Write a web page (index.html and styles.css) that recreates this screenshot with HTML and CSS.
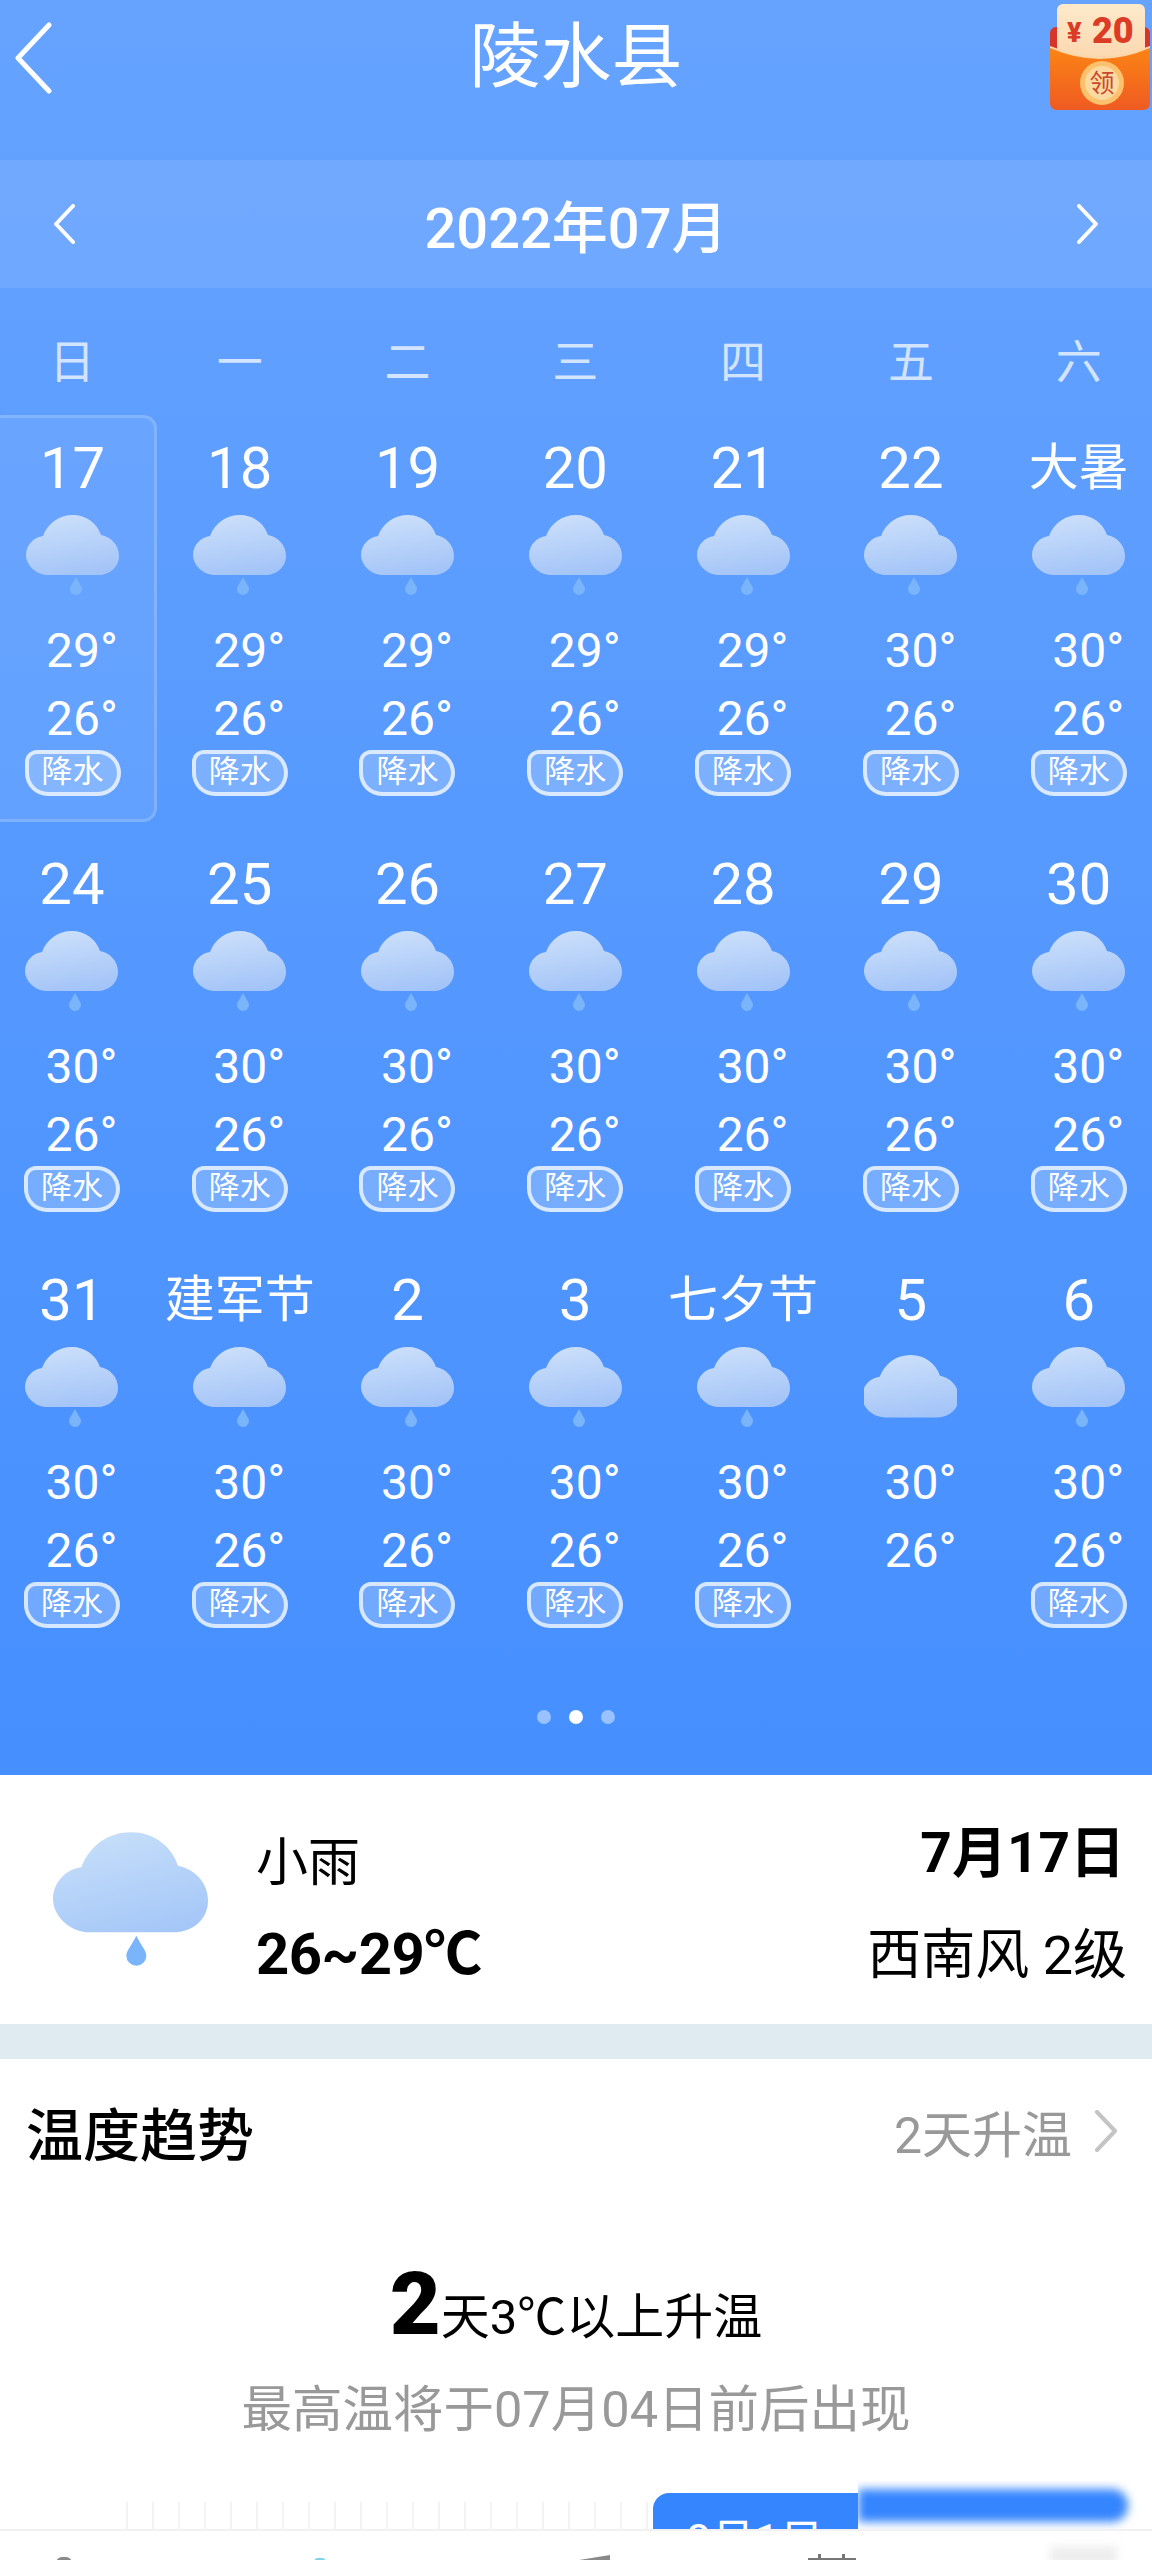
FILE: index.html
```html
<!DOCTYPE html>
<html lang="zh-CN">
<head>
  <meta charset="UTF-8">
  <meta name="viewport" content="width=device-width, initial-scale=1.0">
  <title>陵水县 - 日历</title>
  <link rel="stylesheet" href="styles.css">
</head>
<body>
  <svg class="defs" width="0" height="0">
    <defs>
      <linearGradient id="cloudFill" x1="0.35" y1="0" x2="0.6" y2="1">
        <stop offset="0" stop-color="#cbdffa"/>
        <stop offset="1" stop-color="#a3c4f8"/>
      </linearGradient>
      <linearGradient id="cloudBig" x1="0.3" y1="0" x2="0.7" y2="1">
        <stop offset="0" stop-color="#c6def9"/>
        <stop offset="1" stop-color="#a5c7f8"/>
      </linearGradient>
      <linearGradient id="packBody" x1="0" y1="0" x2="0" y2="1">
        <stop offset="0" stop-color="#fb8514"/>
        <stop offset="1" stop-color="#ef5a22"/>
      </linearGradient>
      <linearGradient id="packCard" x1="0" y1="0" x2="0" y2="1">
        <stop offset="0" stop-color="#fdeacb"/>
        <stop offset="1" stop-color="#fcd6ac"/>
      </linearGradient>
      <path id="cloudShape" d="M22 60C10 60 0 50 0 40C0 30 8 22 17 21C22 8 33 0 47 0C60 0 71 8 75 20C85 22 93 30 93 41C93 52 84 60 72 60Z"/>
      <symbol id="rain" viewBox="0 0 93 80">
        <use href="#cloudShape" fill="url(#cloudFill)"/>
        <path d="M50 62C53 68 56 71 56 74A6 6 0 0 1 44 74C44 71 47 68 50 62Z" fill="#7ab5fb"/>
      </symbol>
      <symbol id="cloudy" viewBox="0 0 93 80" overflow="visible">
        <g transform="translate(-2 8) scale(1.04)"><use href="#cloudShape" fill="url(#cloudFill)"/></g>
      </symbol>
    </defs>
  </svg>

  <div class="page">
    <section class="weather">
      <header class="topbar">
        <svg class="back" width="40" height="72" viewBox="0 0 40 72"><path d="M36 3L5 36L36 69" fill="none" stroke="#fff" stroke-width="5" stroke-linecap="round" stroke-linejoin="round"/></svg>
        <h1>陵水县</h1>
        <svg class="redpack" width="100" height="108" viewBox="0 0 100 108">
          <rect x="0" y="24" width="100" height="60" rx="6" fill="#d8352a"/>
          <rect x="7" y="1" width="88" height="60" rx="6" fill="url(#packCard)"/>
          <text x="17" y="39" class="pack-yen">¥</text>
          <text x="42" y="40" class="pack-amount">20</text>
          <path d="M0 44Q50 66 100 44V100Q100 107 93 107H7Q0 107 0 100Z" fill="url(#packBody)"/>
          <path d="M0 44Q50 66 100 44" fill="none" stroke="#fcd6a6" stroke-width="2"/>
          <circle cx="52" cy="80" r="22" fill="#fcc16c"/>
          <circle cx="52" cy="80" r="17" fill="#fbd9a0"/>
          <text x="52" y="89" text-anchor="middle" class="pack-label">领</text>
        </svg>
      </header>

      <div class="month-nav">
        <svg width="24" height="40" viewBox="0 0 24 40"><path d="M21 2L4 20L21 38" fill="none" stroke="#fff" stroke-width="4" stroke-linecap="round" stroke-linejoin="round"/></svg>
        <div class="month">2022年07月</div>
        <svg width="24" height="40" viewBox="0 0 24 40"><path d="M3 2L20 20L3 38" fill="none" stroke="#fff" stroke-width="4" stroke-linecap="round" stroke-linejoin="round"/></svg>
      </div>

      <div class="weekdays">
        <span>日</span><span>一</span><span>二</span><span>三</span><span>四</span><span>五</span><span>六</span>
      </div>

      <div class="calendar">
        <div class="day selected"><div class="date">17</div><svg class="icon"><use href="#rain"/></svg><div class="temp">29°</div><div class="temp">26°</div><div class="tag">降水</div></div>
        <div class="day"><div class="date">18</div><svg class="icon"><use href="#rain"/></svg><div class="temp">29°</div><div class="temp">26°</div><div class="tag">降水</div></div>
        <div class="day"><div class="date">19</div><svg class="icon"><use href="#rain"/></svg><div class="temp">29°</div><div class="temp">26°</div><div class="tag">降水</div></div>
        <div class="day"><div class="date">20</div><svg class="icon"><use href="#rain"/></svg><div class="temp">29°</div><div class="temp">26°</div><div class="tag">降水</div></div>
        <div class="day"><div class="date">21</div><svg class="icon"><use href="#rain"/></svg><div class="temp">29°</div><div class="temp">26°</div><div class="tag">降水</div></div>
        <div class="day"><div class="date">22</div><svg class="icon"><use href="#rain"/></svg><div class="temp">30°</div><div class="temp">26°</div><div class="tag">降水</div></div>
        <div class="day"><div class="date festival">大暑</div><svg class="icon"><use href="#rain"/></svg><div class="temp">30°</div><div class="temp">26°</div><div class="tag">降水</div></div>

        <div class="day"><div class="date">24</div><svg class="icon"><use href="#rain"/></svg><div class="temp">30°</div><div class="temp">26°</div><div class="tag">降水</div></div>
        <div class="day"><div class="date">25</div><svg class="icon"><use href="#rain"/></svg><div class="temp">30°</div><div class="temp">26°</div><div class="tag">降水</div></div>
        <div class="day"><div class="date">26</div><svg class="icon"><use href="#rain"/></svg><div class="temp">30°</div><div class="temp">26°</div><div class="tag">降水</div></div>
        <div class="day"><div class="date">27</div><svg class="icon"><use href="#rain"/></svg><div class="temp">30°</div><div class="temp">26°</div><div class="tag">降水</div></div>
        <div class="day"><div class="date">28</div><svg class="icon"><use href="#rain"/></svg><div class="temp">30°</div><div class="temp">26°</div><div class="tag">降水</div></div>
        <div class="day"><div class="date">29</div><svg class="icon"><use href="#rain"/></svg><div class="temp">30°</div><div class="temp">26°</div><div class="tag">降水</div></div>
        <div class="day"><div class="date">30</div><svg class="icon"><use href="#rain"/></svg><div class="temp">30°</div><div class="temp">26°</div><div class="tag">降水</div></div>

        <div class="day"><div class="date">31</div><svg class="icon"><use href="#rain"/></svg><div class="temp">30°</div><div class="temp">26°</div><div class="tag">降水</div></div>
        <div class="day"><div class="date festival">建军节</div><svg class="icon"><use href="#rain"/></svg><div class="temp">30°</div><div class="temp">26°</div><div class="tag">降水</div></div>
        <div class="day"><div class="date">2</div><svg class="icon"><use href="#rain"/></svg><div class="temp">30°</div><div class="temp">26°</div><div class="tag">降水</div></div>
        <div class="day"><div class="date">3</div><svg class="icon"><use href="#rain"/></svg><div class="temp">30°</div><div class="temp">26°</div><div class="tag">降水</div></div>
        <div class="day"><div class="date festival">七夕节</div><svg class="icon"><use href="#rain"/></svg><div class="temp">30°</div><div class="temp">26°</div><div class="tag">降水</div></div>
        <div class="day"><div class="date">5</div><svg class="icon"><use href="#cloudy"/></svg><div class="temp">30°</div><div class="temp">26°</div></div>
        <div class="day"><div class="date">6</div><svg class="icon"><use href="#rain"/></svg><div class="temp">30°</div><div class="temp">26°</div><div class="tag">降水</div></div>
      </div>

      <div class="dots"><span></span><span class="on"></span><span></span></div>
    </section>

    <section class="today">
      <svg class="today-icon" width="155" height="134" viewBox="0 0 93 80">
        <use href="#cloudShape" fill="url(#cloudBig)"/>
        <path d="M50 62C53 68 56 71 56 74A6 6 0 0 1 44 74C44 71 47 68 50 62Z" fill="#7ab5fb"/>
      </svg>
      <div class="today-main">
        <div class="today-text">小雨</div>
        <div class="today-range">26~29℃</div>
      </div>
      <div class="today-side">
        <div class="today-date">7月17日</div>
        <div class="today-wind">西南风 2级</div>
      </div>
    </section>

    <section class="trend">
      <div class="trend-head">
        <h2>温度趋势</h2>
        <div class="trend-link">2天升温
          <svg width="24" height="42" viewBox="0 0 24 42"><path d="M3 2L21 21L3 40" fill="none" stroke="#c4c4c4" stroke-width="4" stroke-linecap="round" stroke-linejoin="round"/></svg>
        </div>
      </div>
      <div class="trend-title"><b>2</b>天3℃以上升温</div>
      <div class="trend-sub">最高温将于07月04日前后出现</div>
      <div class="chart">
        <div class="ticks"></div>
        <div class="chart-tag">8月1日</div>
        <div class="smudge"><div class="smudge-bar"></div></div>
      </div>
    </section>

    <nav class="tabbar">
      <span class="tab-peek tab-home"></span>
      <span class="tab-peek tab-weather"></span>
      <span class="tab-peek tab-video"></span>
      <span class="tab-peek tab-grass">
        <i></i><i></i>
      </span>
      <span class="tab-peek tab-me"></span>
    </nav>
  </div>
</body>
</html>
```

FILE: styles.css
```css
* {
  box-sizing: border-box;
}

body {
  margin: 0;
  font-family: Roboto, "Noto Sans CJK SC", sans-serif;
  background-color: #fff;
  color: #000;
}

.defs {
  display: block;
  height: 0;
}

.page {
  position: relative;
  width: 1152px;
  height: 2560px;
  overflow: hidden;
}

.weather {
  height: 1775px;
  color: #fff;
  background: linear-gradient(#66a3ff, #458fff);
}

.topbar {
  display: grid;
  grid-template-columns: 1fr auto 1fr;
  height: 160px;
}

.topbar h1 {
  margin: 16px 0 0;
  font-size: 71px;
  line-height: 82px;
  font-weight: 400;
}

.back {
  margin: 22px 0 0 13px;
}

.redpack {
  justify-self: end;
  margin: 3px 2px 0 0;
}

.pack-yen {
  font-family: Roboto, sans-serif;
  font-size: 27px;
  font-weight: 900;
  fill: #dc3c26;
}

.pack-amount {
  font-family: Roboto, sans-serif;
  font-size: 36px;
  font-weight: 900;
  fill: #dc3c26;
}

.pack-label {
  font-family: "Noto Sans CJK SC", sans-serif;
  font-size: 25px;
  fill: #c9482f;
}

.month-nav {
  display: flex;
  align-items: center;
  justify-content: space-between;
  height: 128px;
  padding: 0 52px;
  background-color: rgba(255, 255, 255, 0.09);
}

.month {
  margin-top: -2px;
  font-size: 56px;
  font-weight: 500;
}

.weekdays {
  display: grid;
  grid-template-columns: repeat(7, 167.8px);
  width: 1176px;
  margin: 40px 0 19px -12px;
  font-size: 46px;
  line-height: 68px;
  text-align: center;
  color: rgba(255, 255, 255, 0.72);
}

.calendar {
  display: grid;
  grid-template-columns: repeat(7, 167.8px);
  grid-auto-rows: 407px;
  row-gap: 9px;
  width: 1176px;
  margin-left: -12px;
}

.day {
  display: flex;
  flex-direction: column;
  align-items: center;
  padding-top: 18px;
}

.day.selected {
  background-color: rgba(255, 255, 255, 0.07);
  border: 3px solid rgba(255, 255, 255, 0.18);
  border-radius: 14px;
  padding-top: 15px;
  width: 169px;
}

.date {
  height: 70px;
  font-size: 58px;
  line-height: 70px;
  white-space: nowrap;
}

.date.festival {
  font-size: 50px;
}

.icon {
  width: 93px;
  height: 80px;
  margin-top: 12px;
}

.temp {
  height: 68px;
  padding-left: 19px;
  font-size: 48px;
  line-height: 68px;
}

.icon + .temp {
  margin-top: 22px;
}

.tag {
  width: 96px;
  height: 46px;
  margin-top: -3px;
  border: 4px solid rgba(255, 255, 255, 0.72);
  border-radius: 12px 23px 23px 23px;
  background-color: rgba(255, 255, 255, 0.22);
  font-size: 31px;
  line-height: 36px;
  text-align: center;
}

.dots {
  display: flex;
  justify-content: center;
  gap: 18px;
  margin-top: 56px;
}

.dots span {
  width: 14px;
  height: 14px;
  border-radius: 50%;
  background-color: rgba(255, 255, 255, 0.45);
}

.dots .on {
  background-color: #fff;
}

.today {
  display: flex;
  height: 249px;
  padding: 57px 25px 0 53px;
}

.today-icon {
  flex: none;
}

.today-main {
  margin-left: 48px;
  flex: 1;
}

.today-text {
  font-size: 52px;
  line-height: 64px;
}

.today-range {
  margin-top: 23px;
  font-size: 58px;
  line-height: 70px;
  font-weight: 700;
  letter-spacing: -0.5px;
}

.today-side {
  margin-top: -11px;
  text-align: right;
}

.today-date {
  padding-right: 2px;
  font-size: 55px;
  line-height: 64px;
  font-weight: 700;
}

.today-wind {
  margin-top: 39px;
  font-size: 54px;
  line-height: 64px;
}

.trend {
  height: 505px;
  padding-top: 34px;
  border-top: 35px solid #e0eaf1;
  background-color: #fff;
}

.trend-head {
  display: flex;
  justify-content: space-between;
  align-items: center;
  height: 76px;
  padding: 0 34px 0 26px;
}

.trend-head h2 {
  margin: 0;
  font-size: 57px;
  font-weight: 500;
}

.trend-link {
  display: flex;
  align-items: center;
  gap: 22px;
  font-size: 50px;
  color: #999;
}

.trend-title {
  height: 90px;
  margin-top: 91px;
  font-size: 49px;
  line-height: 90px;
  text-align: center;
}

.trend-title b {
  font-size: 88px;
  line-height: 1;
  font-weight: 900;
}

.trend-sub {
  margin-top: 26px;
  font-size: 50.5px;
  line-height: 68px;
  text-align: center;
  color: #999;
}

.chart {
  position: relative;
  display: flex;
  align-items: flex-end;
  height: 42px;
  margin-top: 43px;
  padding-left: 126px;
}

.ticks {
  width: 524px;
  height: 27px;
  background: repeating-linear-gradient(90deg, #f3f3f3 0 2px, #fff 2px 26px);
}

.chart-tag {
  width: 320px;
  height: 36px;
  margin-left: 3px;
  padding: 22px 0 0 33px;
  overflow: hidden;
  border-radius: 16px 16px 0 0;
  background-color: #3585ff;
  color: #fff;
  font-size: 44px;
  line-height: 52px;
  white-space: nowrap;
}

/* smudged over in the screenshot */
.smudge {
  position: absolute;
  left: 858px;
  right: 0;
  top: -6px;
  bottom: -31px;
  overflow: hidden;
  background-color: #fff;
}

.smudge-bar {
  width: 270px;
  height: 33px;
  margin-top: 8px;
  border-radius: 0 16px 16px 0;
  background-color: #3585ff;
  filter: blur(5px);
}

.tabbar {
  position: relative;
  height: 31px;
  border-top: 2px solid #f1f1f1;
  background-color: #fff;
}

.tab-peek {
  position: absolute;
  top: 26px;
  background-color: #8a8a8a;
}

.tab-home {
  left: 56px;
  width: 16px;
  height: 6px;
  border-radius: 8px 8px 0 0;
}

.tab-weather {
  left: 314px;
  width: 12px;
  height: 4px;
  top: 27px;
  border-radius: 6px 6px 0 0;
  background-color: #7fd3e6;
}

.tab-video {
  left: 573px;
  width: 37px;
  height: 6px;
  top: 24px;
  clip-path: polygon(0 100%, 100% 0, 100% 100%);
}

.tab-grass {
  left: 808px;
  width: 48px;
  height: 3px;
  top: 27px;
  background-color: #777;
}

.tab-grass i {
  position: absolute;
  top: -4px;
  width: 3px;
  height: 7px;
  background-color: #777;
}

.tab-grass i:first-child {
  left: 10px;
}

.tab-grass i:last-child {
  left: 34px;
}

.tab-me {
  left: 1050px;
  width: 67px;
  height: 20px;
  top: 15px;
  background-color: #eee;
  filter: blur(4px);
}
```
